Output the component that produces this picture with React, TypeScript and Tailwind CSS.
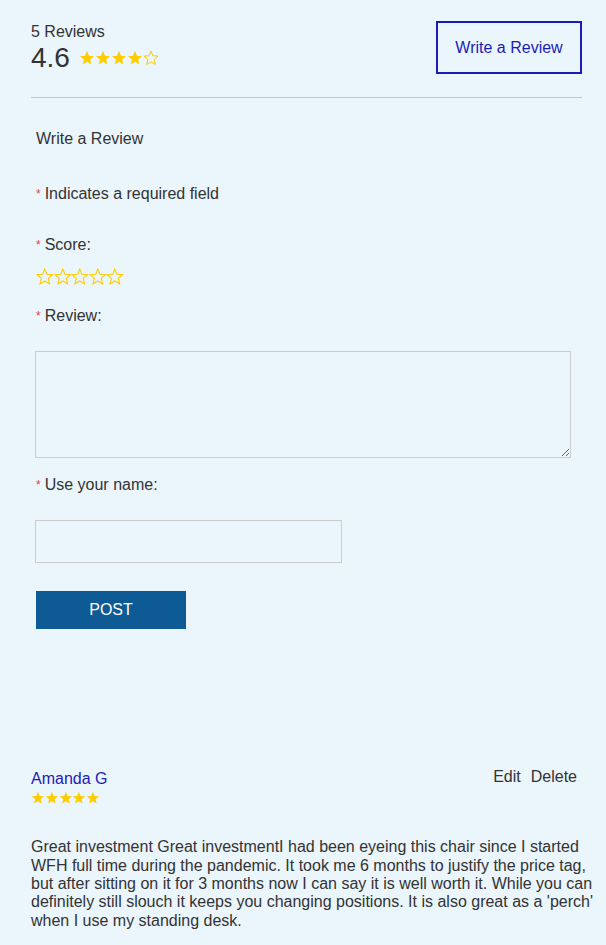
import React from "react";

const STAR = "12,1.5 14.9,8.6 22.6,9.2 16.7,14.2 18.5,21.7 12,17.7 5.5,21.7 7.3,14.2 1.4,9.2 9.1,8.6";

const Stars = ({ filled, size, className = "" }: { filled: number; size: number; className?: string }) => (
  <div className={`flex ${className}`}>
    {Array.from({ length: 5 }, (_, i) => (
      <svg key={i} width={size} height={size} viewBox="0 0 24 24">
        {i < filled ? (
          <polygon points={STAR} fill="#ffcc00" />
        ) : (
          <polygon points={STAR} fill="none" stroke="#ffcc00" strokeWidth="1.5" strokeLinejoin="miter" />
        )}
      </svg>
    ))}
  </div>
);

const Req = () => <span className="text-[#e8403a] text-[12px] mr-[4px] relative top-[-1px]">*</span>;

export default function App() {
  return (
    <div className="min-h-[945px] bg-[#eaf5fc] pl-[31px] pr-[24px] pt-[21px] text-[#333] font-['Liberation_Sans',Arial,sans-serif]">
      <div className="flex justify-between items-start">
        <div className="pt-[1px]">
          <div className="text-[16px] leading-[20px]">5 Reviews</div>
          <div className="flex items-center">
            <span className="text-[28px] leading-[32px]">4.6</span>
            <Stars filled={4} size={16} className="ml-[9px]" />
          </div>
        </div>
        <button className="h-[53px] w-[146px] border-2 border-[#1c1cb5] text-[#1c1cb5] text-[16px] bg-transparent">
          Write a Review
        </button>
      </div>
      <div className="mt-[23px] border-t border-[#a9cde9]" />

      <div className="pl-[5px]">
        <div className="mt-[31px] text-[16px] leading-[20px]">Write a Review</div>
        <div className="mt-[35px] text-[16px] leading-[20px]">
          <Req />Indicates a required field
        </div>
        <div className="mt-[30px] text-[16px] leading-[20px]">
          <Req />Score:
        </div>
        <Stars filled={0} size={17.6} className="mt-[12px]" />
        <div className="mt-[20px] text-[16px] leading-[20px]">
          <Req />Review:
        </div>
        <textarea className="block mt-[24px] -ml-[1px] w-[536px] h-[107px] border border-[#cccccc] bg-transparent resize" />
        <div className="mt-[17px] text-[16px] leading-[20px]">
          <Req />Use your name:
        </div>
        <input className="block mt-[24px] -ml-[1px] w-[307px] h-[43px] border border-[#cccccc] bg-transparent" />
        <button className="block mt-[28px] w-[150px] h-[38px] bg-[#0d5a94] text-white text-[16px]">POST</button>
      </div>

      <div className="mt-[140px] flex justify-between items-start">
        <div>
          <div className="text-[16px] leading-[20px] text-[#1c1cb5]">Amanda G</div>
          <Stars filled={5} size={13.8} className="mt-[2px]" />
        </div>
        <div className="flex gap-[10px] text-[16px] leading-[18px] pr-[5px] mt-[-1px]">
          <span>Edit</span>
          <span>Delete</span>
        </div>
      </div>
      <p className="mt-[34px] mr-[-14px] text-[16px] leading-[18.3px] pb-[10px]">
        Great investment Great investmentI had been eyeing this chair since I started WFH full time during the
        pandemic. It took me 6 months to justify the price tag, but after sitting on it for 3 months now I can say it
        is well worth it. While you can definitely still slouch it keeps you changing positions. It is also great as a
        'perch' when I use my standing desk.
      </p>
    </div>
  );
}
